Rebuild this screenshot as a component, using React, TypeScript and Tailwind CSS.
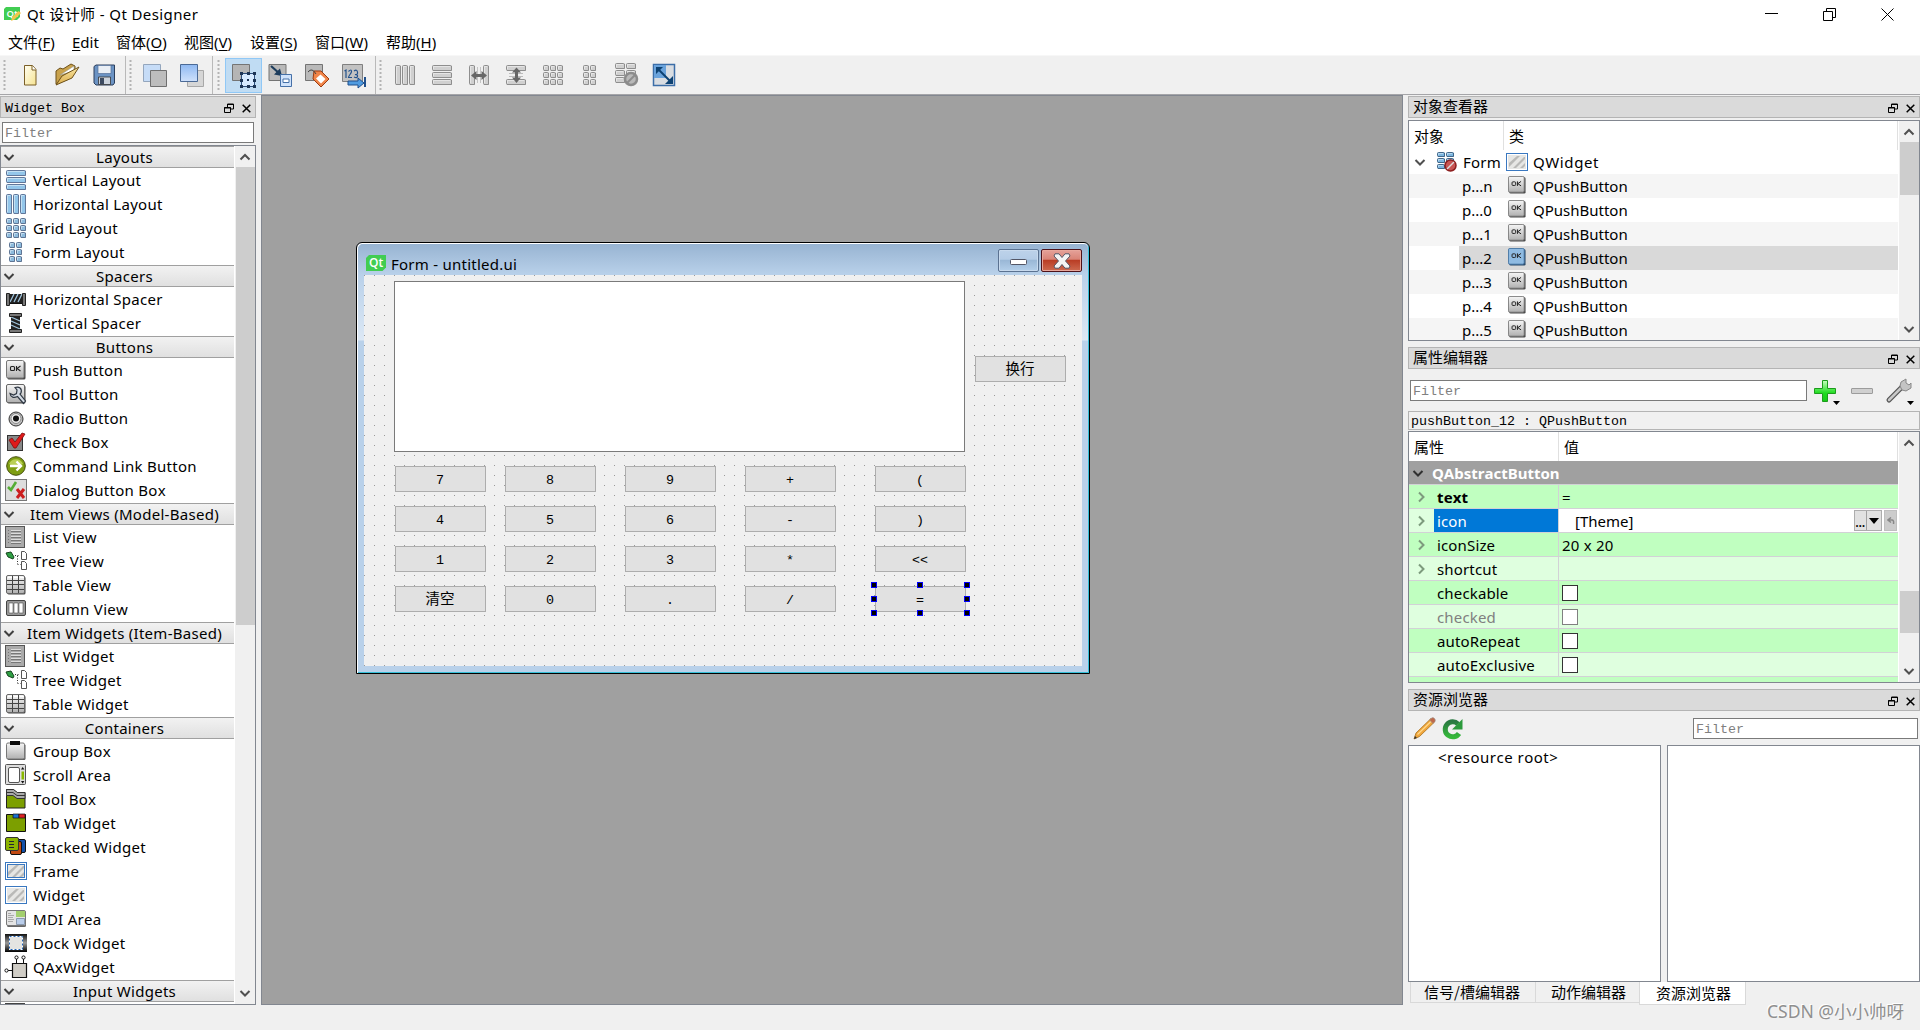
import type { ReactNode } from "react";

type IconName =
  | "vbox" | "hbox" | "grid" | "form" | "hspacer" | "vspacer" | "push" | "pushSelected" | "tool" | "radio" | "check"
  | "command" | "dialog" | "list" | "tree" | "table" | "column" | "group" | "scroll" | "toolbox" | "tab"
  | "stacked" | "frame" | "widget" | "mdi" | "dock" | "ax" | "broken";

interface WidgetGroup {
  title: string;
  items: { icon: IconName; label: string }[];
}

const widgetGroups: WidgetGroup[] = [
  {
    title: "Layouts",
    items: [
      { icon: "vbox", label: "Vertical Layout" },
      { icon: "hbox", label: "Horizontal Layout" },
      { icon: "grid", label: "Grid Layout" },
      { icon: "form", label: "Form Layout" },
    ],
  },
  {
    title: "Spacers",
    items: [
      { icon: "hspacer", label: "Horizontal Spacer" },
      { icon: "vspacer", label: "Vertical Spacer" },
    ],
  },
  {
    title: "Buttons",
    items: [
      { icon: "push", label: "Push Button" },
      { icon: "tool", label: "Tool Button" },
      { icon: "radio", label: "Radio Button" },
      { icon: "check", label: "Check Box" },
      { icon: "command", label: "Command Link Button" },
      { icon: "dialog", label: "Dialog Button Box" },
    ],
  },
  {
    title: "Item Views (Model-Based)",
    items: [
      { icon: "list", label: "List View" },
      { icon: "tree", label: "Tree View" },
      { icon: "table", label: "Table View" },
      { icon: "column", label: "Column View" },
    ],
  },
  {
    title: "Item Widgets (Item-Based)",
    items: [
      { icon: "list", label: "List Widget" },
      { icon: "tree", label: "Tree Widget" },
      { icon: "table", label: "Table Widget" },
    ],
  },
  {
    title: "Containers",
    items: [
      { icon: "group", label: "Group Box" },
      { icon: "scroll", label: "Scroll Area" },
      { icon: "toolbox", label: "Tool Box" },
      { icon: "tab", label: "Tab Widget" },
      { icon: "stacked", label: "Stacked Widget" },
      { icon: "frame", label: "Frame" },
      { icon: "widget", label: "Widget" },
      { icon: "mdi", label: "MDI Area" },
      { icon: "dock", label: "Dock Widget" },
      { icon: "ax", label: "QAxWidget" },
    ],
  },
];

const menus = [
  { label: "文件", key: "F", width: "w-[64px]" },
  { label: "", key: "E", rest: "dit", width: "w-[44px]" },
  { label: "窗体", key: "O", width: "w-[68px]" },
  { label: "视图", key: "V", width: "w-[66px]" },
  { label: "设置", key: "S", width: "w-[65px]" },
  { label: "窗口", key: "W", width: "w-[71px]" },
  { label: "帮助", key: "H", width: "w-[64px]" },
];

const columns = [31, 141, 261, 381, 511];
const rows = [191, 231, 271, 311];
const keypad = [
  ["7", "8", "9", "+", "("],
  ["4", "5", "6", "-", ")"],
  ["1", "2", "3", "*", "<<"],
  ["清空", "0", ".", "/", "="],
];

const objects = ["n", "0", "1", "2", "3", "4", "5"];

const properties = [
  { name: "text", value: "=", expandable: true, bold: true },
  { name: "icon", value: "[Theme]", expandable: true, selected: true },
  { name: "iconSize", value: "20 x 20", expandable: true },
  { name: "shortcut", value: "", expandable: true },
  { name: "checkable", checkbox: true },
  { name: "checked", checkbox: true, disabled: true },
  { name: "autoRepeat", checkbox: true },
  { name: "autoExclusive", checkbox: true },
];

const mono = "font-['Liberation_Mono','Noto_Sans_CJK_SC',monospace] text-[13.33px] tracking-normal";

function Bars({ cells, fill, stroke }: { cells: number[][]; fill: string; stroke: string }) {
  return (
    <>
      {cells.map(([x, y, w, h], i) => (
        <g key={i}>
          <rect x={x + 0.5} y={y + 0.5} width={w - 1} height={h - 1} rx="1" fill={fill} stroke={stroke} />
          <path d={`M${x + 1.5} ${y + h - 2}V${y + 1.5}H${x + w - 2}`} fill="none" stroke="#fff" strokeOpacity=".45" />
          <path d={`M${x + 1} ${y + h - 0.5}H${x + w - 0.5}V${y + 1}`} fill="none" stroke={stroke} />
        </g>
      ))}
    </>
  );
}

const vboxCells = [[0, 0, 20, 6], [0, 7, 20, 6], [0, 14, 20, 6]];
const hboxCells = [[0, 0, 6, 20], [7, 0, 6, 20], [14, 0, 6, 20]];
const gridCells = [0, 7, 14].flatMap((y) => [0, 7, 14].map((x) => [x, y, 6, 6]));
const formCells = [0, 7, 14].flatMap((y) => [3, 10].map((x) => [x, y, 6, 6]));

function Raised() {
  return (
    <>
      <rect x="1.5" y="1.5" width="18" height="18" rx="1.5" fill="#444" />
      <rect x=".5" y=".5" width="18" height="18" rx="1.5" fill="url(#metal)" stroke="#666" />
    </>
  );
}

function WidgetGlyph({ name }: { name: IconName }) {
  switch (name) {
    case "vbox":
      return <Bars cells={vboxCells} fill="#93c6ea" stroke="#61779a" />;
    case "hbox":
      return <Bars cells={hboxCells} fill="#93c6ea" stroke="#61779a" />;
    case "grid":
      return <Bars cells={gridCells} fill="#8dbbdd" stroke="#5f7594" />;
    case "form":
      return <Bars cells={formCells} fill="#8dbbdd" stroke="#5f7594" />;
    case "hspacer":
      return (
        <>
          <path d="M3 5h14v10H3z" fill="#222" />
          <path d="M4 13l4-8M8 13l4-8M12 13l4-8" stroke="#9fc4dd" strokeWidth="1.3" />
          <path d="M3 14.5h14" stroke="#111" />
          <path d="M.5 4.5h3v12h-3zM16.500 4.500h3v12h-3z" fill="#777" stroke="#222" />
        </>
      );
    case "vspacer":
      return (
        <>
          <path d="M5 3h9v14H5z" fill="#222" />
          <path d="M5 4l9 4M5 8l9 4M5 12l9 4" stroke="#9fc4dd" strokeWidth="1.3" />
          <path d="M3.500 .5h12v3h-12zM3.500 16.500h12v3h-12z" fill="#777" stroke="#222" />
        </>
      );
    case "push":
    case "pushSelected":
      return (
        <>
          <rect x="1.500" y="1.500" width="18" height="18" rx="1.500" fill={name === "push" ? "#4a4a4a" : "#2b4a68"} />
          <rect x=".5" y=".5" width="17.500" height="17.500" rx="1.500" fill={name === "push" ? "url(#metal)" : "#8fbbe2"} stroke={name === "push" ? "#777" : "#3f6f9f"} />
          <rect x="4.500" y="6.500" width="4" height="4" rx="1" fill="none" stroke="#222" strokeWidth="1.100" />
          <path d="M10.500 6v5M14.500 6l-3.500 2.500 3.500 2.500" fill="none" stroke="#222" strokeWidth="1.100" />
        </>
      );
    case "tool":
      return (
        <>
          <Raised />
          <path d="M9 3.500c4-1.500 7.500 1 6 5.500l-1 1 5.500 7-2 2.500-6-7c-3.500 1.500-7 1-7.500-3l3.500 1.500 3-1.500.5-3.500z" fill="#d4dbe4" stroke="#2f3843" strokeWidth="1.200" />
        </>
      );
    case "radio":
      return (
        <>
          <circle cx="10" cy="11" r="7" fill="#c2c2c2" stroke="#333" />
          <circle cx="10" cy="10.500" r="5" fill="#eee" stroke="#888" />
          <circle cx="10" cy="10.500" r="3" fill="#111" />
        </>
      );
    case "check":
      return (
        <>
          <rect x="1.500" y="3.500" width="15" height="15" fill="#888" stroke="#333" />
          <path d="M3 8l3-2 3 4 7-9 3 1-9 14H8z" fill="#e01b1b" stroke="#7c0f0f" strokeWidth=".8" />
        </>
      );
    case "command":
      return (
        <>
          <circle cx="10" cy="10" r="9.300" fill="#7f9e12" stroke="#454f0c" />
          <path d="M3 8a7.500 7.500 0 0114 0c-4 2-10 2-14 0z" fill="#b9cf56" />
          <path d="M4 10h11M10.500 5.500L15 10l-4.500 4.500" fill="none" stroke="#fff" strokeWidth="2.400" />
        </>
      );
    case "dialog":
      return (
        <>
          <rect x="-.5" y="-.5" width="21" height="21" fill="#ddd" stroke="#777" />
          <path d="M2 7l3 3 5-8" fill="none" stroke="#55ad35" strokeWidth="2.600" />
          <path d="M11 9l7 9M18 9l-7 9" stroke="#cc1f1f" strokeWidth="3" />
        </>
      );
    case "list":
      return (
        <>
          <rect x="-.5" y="-.5" width="19" height="21" fill="#aaa" stroke="#555" />
          <path d="M5 3.500h10M5 6.500h10M5 9.500h10M5 12.500h10M5 15.500h10" stroke="#dcdcdc" />
          <path d="M2 3.500h1M2 6.500h1M2 9.500h1M2 12.500h1M2 15.500h1M5 4.500h10M5 7.500h10M5 10.500h10M5 13.500h10M5 16.500h10" stroke="#777" />
        </>
      );
    case "tree":
      return (
        <>
          <path d="M0 2l5-1 3 5-1 2-5-2z" fill="#2fa044" stroke="#16451e" />
          <path d="M9 4.500h5M11.500 5v8M11.500 13.500h3" stroke="#333" strokeDasharray="1 1.500" />
          <path d="M15.500 .5h3l2 2v6h-5zM15.500 10.500h3l2 2v6h-5z" fill="#fff" stroke="#555" />
        </>
      );
    case "table":
      return (
        <>
          <Raised />
          <path d="M1 5.500h17M1 9.500h17M1 14.500h17M6.500 1v17M12.500 1v17" stroke="#444" />
          <path d="M2 2.500h4M8 2.500h4M14 2.500h4" stroke="#fff" />
        </>
      );
    case "column":
      return (
        <>
          <rect x=".5" y="1.500" width="19" height="15" rx="1.500" fill="#999" stroke="#444" />
          <path d="M3 4h4v10H3zM8 4h4v10H8zM13 4h4v10h-4z" fill="#fff" stroke="#555" strokeWidth=".6" />
        </>
      );
    case "group":
      return (
        <>
          <rect x="1.500" y="3" width="18" height="16" rx="1.500" fill="#555" />
          <rect x=".5" y="2" width="18" height="16" rx="1.500" fill="url(#metal)" stroke="#777" />
          <path d="M4 0h10v4H4z" fill="#0a0a0a" />
        </>
      );
    case "scroll":
      return (
        <>
          <rect x="-.5" y="-.5" width="20" height="20" rx="1" fill="#ddd" stroke="#555" />
          <rect x="2.500" y="2.500" width="11" height="15" rx="1.500" fill="#fff" stroke="#555" />
          <path d="M15.500 6.500h2.500v8h-2.500z" fill="#8ab800" />
          <path d="M15 4.500l1.700-2.500 1.700 2.500zM15 16l1.700 2.500 1.700-2.500z" fill="#111" />
        </>
      );
    case "toolbox":
      return (
        <>
          <path d="M.5 .5h7l3 3h8.500v15.500H.5z" fill="#7c9f00" stroke="#222" />
          <path d="M.5 .5h7l4 3h7.500v6h-8l-4-3H.5z" fill="#aaa" stroke="#333" />
          <path d="M.5 3.500h6.500l4 3h8" fill="none" stroke="#333" />
        </>
      );
    case "tab":
      return (
        <>
          <path d="M.5 1.500h19v17H.5z" fill="#7c9f00" stroke="#111" />
          <path d="M7 1h6v4H7z" fill="#1a6fd0" stroke="#111" strokeWidth=".7" />
          <path d="M13 1h6v4h-6z" fill="#d22" stroke="#111" strokeWidth=".7" />
        </>
      );
    case "stacked":
      return (
        <>
          <rect x="8.500" y="2.500" width="11" height="13" rx="1.500" fill="#1450a8" stroke="#111" />
          <rect x="4.500" y="4.500" width="11" height="13" rx="1.500" fill="#c24a12" stroke="#111" />
          <rect x="-.5" y=".5" width="13" height="13" rx="1.500" fill="#8cb300" stroke="#333" />
          <path d="M3 4.500h5M3 7.500h5M3 10.500h5" stroke="#223" />
        </>
      );
    case "frame":
    case "widget":
      return (
        <>
          <rect x="-.5" y="1.500" width="21" height="17" fill="#fff" stroke="#3a78c0" />
          <rect x="1" y="3" width="18" height="14" fill="#e6e6e4" />
          <path d="M2 11l8-7h3L2 15zM6 16L17 5h1v2l-9 9zM13 16l5-5v3l-2 2z" fill="#b9b9b7" />
          {name === "frame" && <rect x="1.500" y="3.500" width="17" height="13" fill="none" stroke="#3a78c0" />}
        </>
      );
    case "mdi":
      return (
        <>
          <rect x="1" y="2.500" width="19" height="15.500" rx="1.500" fill="#666" />
          <rect x=".5" y="1.500" width="19" height="15" rx="1.500" fill="#e4e4e4" stroke="#777" />
          <path d="M10 2h9v6h-9z" fill="#a3cf6e" />
          <path d="M10.500 9.500h8v6h-8z" fill="#b9cdea" stroke="#8a9ab0" />
          <path d="M2 4.500h3M2 6.500h6M2 8.500h5M2 10.500h6M2 12.500h5" stroke="#aaa" />
        </>
      );
    case "dock":
      return (
        <>
          <rect x="-1" y="1" width="22" height="18" fill="url(#dark)" />
          <rect x="3.500" y="3.500" width="13" height="13" fill="#e4e4e2" stroke="#fff" />
          <rect x="3.500" y="3.500" width="13" height="13" fill="none" stroke="#2264b5" strokeDasharray="2 2" />
        </>
      );
    case "ax":
      return (
        <>
          <path d="M6.500 6.500h14v14h-14z" fill="#d0cdc6" stroke="#111" strokeWidth="1.200" />
          <path d="M10.500 6V2M17.500 6V2M6 13.500H1" stroke="#111" />
          <circle cx="10.500" cy=".5" r="1.600" fill="#fff" stroke="#111" />
          <circle cx="17.500" cy=".5" r="1.600" fill="#fff" stroke="#111" />
          <circle cx="0.500" cy="13.500" r="1.600" fill="#fff" stroke="#111" />
        </>
      );
    case "broken":
      return (
        <>
          <Bars cells={[[0, 0, 8, 5], [9, 0, 8, 5], [0, 6, 8, 5], [9, 6, 8, 5], [0, 12, 8, 5]]} fill="#7db6e0" stroke="#416789" />
          <circle cx="13.500" cy="13.500" r="5.500" fill="#c85553" stroke="#8c1f1f" strokeWidth="1.500" />
          <path d="M10 17l7-7" stroke="#ddd" strokeWidth="1.500" />
        </>
      );
  }
}

function WidgetIcon({ name }: { name: IconName }) {
  return (
    <svg className="h-5 w-5 shrink-0 overflow-visible" viewBox="0 0 20 20">
      <WidgetGlyph name={name} />
    </svg>
  );
}

function Chevron({ dir, color = "#505050" }: { dir: "up" | "down" | "right"; color?: string }) {
  const paths = {
    up: "M1.500 8.500L6 4l4.500 4.500",
    down: "M1.500 4L6 8.500 10.500 4",
    right: "M4 1.500L8.500 6 4 10.500",
  };
  return (
    <svg className="h-3 w-3 shrink-0" viewBox="0 0 12 12" fill="none" stroke={color} strokeWidth="2">
      <path d={paths[dir]} />
    </svg>
  );
}

function ScrollBar({ before, thumb }: { before: string; thumb: string }) {
  return (
    <div className="flex w-[20px] shrink-0 flex-col items-center bg-[#f0f0f0]">
      <div className="flex h-[21px] shrink-0 items-center">
        <Chevron dir="up" />
      </div>
      <div className={`shrink-0 ${before}`} />
      <div className={`w-[19px] shrink-0 bg-[#cdcdcd] ${thumb}`} />
      <div className="mt-auto flex h-[23px] shrink-0 items-center">
        <Chevron dir="down" />
      </div>
    </div>
  );
}

function DockTitle({ children }: { children: ReactNode }) {
  return (
    <div className={`flex h-[22px] shrink-0 items-center border border-[#b4b4b4] bg-[#dadada] pt-[2px] pl-1 text-black ${mono}`}>
      <span className="pt-[2px]">{children}</span>
      <svg className="ml-auto h-[10px] w-[10px]" viewBox="0 0 10 10" fill="none" stroke="#000">
        <path d="M3.500 4V1h6v5h-3M3 1.500h7M.5 4.500h6v5h-6zM0 5h7" />
      </svg>
      <svg className="mr-[4px] ml-[8px] h-[9px] w-[9px]" viewBox="0 0 9 9" stroke="#000" strokeWidth="1.500">
        <path d="M.7 .7l7.600 7.600M8.300 .7L.7 8.300" />
      </svg>
    </div>
  );
}

function FilterInput({ className }: { className: string }) {
  return (
    <div className={`flex h-[21px] items-center border border-[#7a7a7a] bg-white pt-[2px] pl-[2px] text-[#808080] ${mono} ${className}`}>
      Filter
    </div>
  );
}

function Handle({ className }: { className: string }) {
  return (
    <svg className={`h-8 w-[3px] shrink-0 ${className}`} viewBox="0 0 3 32" stroke="#b4b4b4" strokeWidth="2">
      <path d="M1.500 1v31" strokeDasharray="2 2" />
    </svg>
  );
}

function ToolButton({ active, children }: { active?: boolean; children: ReactNode }) {
  return (
    <div className={`flex h-[35px] w-[37px] shrink-0 items-center justify-center ${active ? "border border-[#90c8f6] bg-[#c0dcf3]" : ""}`}>
      <svg className="h-6 w-6 overflow-visible" viewBox="0 0 24 24" fill="none">
        {children}
      </svg>
    </div>
  );
}

const gray = { fill: "#d0d0d0", stroke: "#8e8e8e" };

function ToolBars() {
  return (
    <div className="flex h-[40px] shrink-0 items-center border-t border-b border-t-[#f7f7f7] border-b-[#a5a5a8] bg-[#f0f0f0]">
      <div className="flex h-full w-[126px] items-center border-r border-[#b9b9b9]">
        <Handle className="mr-[5px] ml-[3px]" />
        <ToolButton>
          <path d="M6.500 2.500h8l3.500 4v15.500H6.500z" fill="url(#paper)" stroke="#7b5f26" />
          <path d="M14 2.500v4.500h4" fill="#fff" stroke="#7b5f26" />
        </ToolButton>
        <ToolButton>
          <path d="M1 21V8l4-3 3 1 8-5 4 2v5l-6 8z" fill="#c9a24c" stroke="#6d511b" />
          <path d="M5 12l14-9v5z" fill="#fff" stroke="#998" strokeWidth=".6" />
          <path d="M1 22l6-9 17-9-7 11z" fill="url(#folder)" stroke="#6d511b" />
        </ToolButton>
        <ToolButton>
          <path d="M2 3.500l2-1.500h18.500v18L21 22H4l-2-2z" fill="#6b93c4" stroke="#2c3f5c" />
          <path d="M6 2.500h13v8H6z" fill="#e9eef5" stroke="#54709a" strokeWidth=".7" />
          <path d="M6.500 14h12v7.500h-12z" fill="#ccd3dc" stroke="#333" strokeWidth=".8" />
          <path d="M8 15h4v6H8z" fill="#3c4a60" />
        </ToolButton>
      </div>
      <div className="flex h-full w-[87px] items-center border-r border-[#b9b9b9]">
        <Handle className="mr-[4px] ml-[3px]" />
        <ToolButton>
          <path d="M.5 1.500h17v17H.5z" fill="#c6dcf7" stroke="#94a6bd" />
          <path d="M7.500 7.500h16v16h-16z" fill="#bdbdbd" stroke="#6f6f6f" />
        </ToolButton>
        <ToolButton>
          <path d="M7.500 7.500h16v16h-16z" fill="#d6d6d6" stroke="#a8a8a8" />
          <path d="M.5 1.500h17v17H.5z" fill="url(#blue)" stroke="#4b6a96" />
        </ToolButton>
      </div>
      <div className="flex h-full w-[163px] items-center border-r border-[#b9b9b9]">
        <Handle className="mr-[5px] ml-[4px]" />
        <ToolButton active>
          <path d="M.5 1.500h17v16H.5z" fill="#b5b5b5" stroke="#747474" />
          <path d="M9.500 10.500h13v13h-13z" fill="#d7eaff" stroke="#2d4e7a" />
          <path d="M8 9h3v3H8zM15 9h3v3h-3zM21 9h3v3h-3zM8 16h3v3H8zM21 16h3v3h-3zM8 22h3v3H8zM15 22h3v3h-3zM21 22h3v3h-3zM15 16h2v2h-2z" fill="#1d3454" />
        </ToolButton>
        <ToolButton>
          <path d="M0 1.500h17v16H0z" fill="#b9b9b9" stroke="#747474" />
          <path d="M2 3l9 8" stroke="#1c3c5c" strokeWidth="2.200" />
          <path d="M13 13l-8-1.500 6-6z" fill="#1c3c5c" />
          <path d="M11.500 11.500h11v12h-11z" fill="#cfe2fb" stroke="#4570a8" />
          <path d="M14 16h6v3.500h-6z" fill="#fff" stroke="#4570a8" />
        </ToolButton>
        <ToolButton>
          <path d="M-.5 1.500h17v16h-17z" fill="#b9b9b9" stroke="#747474" />
          <path d="M8 8h7l8 8-8 8-8-8z" fill="#f08448" stroke="#9c3b10" />
          <path d="M14.500 11.500l5 4.500-4.500 4.500-5-5z" fill="#fff" />
          <path d="M2 9q4-5 8 2" stroke="#444" />
        </ToolButton>
        <ToolButton>
          <path d="M-.5 1.500h20v17h-20z" fill="#c2c2c2" stroke="#808080" />
          <path d="M1.500 8L3 7v8M5.500 8.500q3-3 3 0c0 2-3 4-3 6h3.500M11 8q3-2 3.500 1T12 11.500q3 0 2.500 2T11 14" stroke="#23528c" strokeWidth="1.200" />
          <path d="M5 18h10v-3l6 5-6 5v-3H5z" fill="#4f9be0" stroke="#1f4f8c" />
          <path d="M22 14v10" stroke="#1f4f8c" strokeWidth="2" />
        </ToolButton>
      </div>
      <div className="flex items-center">
        <Handle className="mr-[4px] ml-[3px]" />
        <ToolButton>
          <g transform="translate(2 2)"><Bars cells={hboxCells} {...gray} /></g>
        </ToolButton>
        <ToolButton>
          <g transform="translate(2 2)"><Bars cells={vboxCells} {...gray} /></g>
        </ToolButton>
        <ToolButton>
          <g transform="translate(2 2)">
            <Bars cells={[[0, 0, 6, 20], [14, 0, 6, 20]]} {...gray} />
            <path d="M8.500 2v16M11.500 2v16" stroke="#c4c4c4" />
            <path d="M2 10.500L7.500 6v3h5V6l5.500 4.500-5.500 4.500v-3h-5v3z" fill="#666" />
          </g>
        </ToolButton>
        <ToolButton>
          <g transform="translate(2 2)">
            <Bars cells={[[0, 0, 20, 6], [0, 14, 20, 6]]} {...gray} />
            <path d="M3 8.500h14M3 11.500h14" stroke="#bbb" />
            <path d="M10.500 2.500l4.500 5h-3v5h3l-4.500 5.500L6 12.500h3v-5H6z" fill="#666" />
          </g>
        </ToolButton>
        <ToolButton>
          <g transform="translate(2 2)"><Bars cells={gridCells} {...gray} /></g>
        </ToolButton>
        <ToolButton>
          <g transform="translate(2 2)"><Bars cells={formCells} {...gray} /></g>
        </ToolButton>
        <ToolButton>
          <Bars cells={[[0, 0, 10, 6], [11, 0, 10, 6], [0, 7, 10, 6], [11, 7, 10, 6], [0, 14, 10, 6]]} {...gray} />
          <circle cx="16" cy="16" r="6" fill="#b9b9b9" stroke="#8c8c8c" strokeWidth="2.500" />
          <path d="M12 20l8-8" stroke="#8c8c8c" strokeWidth="2" />
        </ToolButton>
        <ToolButton>
          <path d="M1.500 1.500h21v21h-21z" fill="#d9dde2" stroke="#3c6ea8" strokeWidth="1.500" />
          <path d="M2 2h12v13H2z" fill="#6aa3dc" />
          <path d="M6 6l12 12" stroke="#0d4273" strokeWidth="2" />
          <path d="M4 4h7l-7 7zM21 21h-8l8-8z" fill="#0d4273" />
        </ToolButton>
      </div>
    </div>
  );
}

function WidgetBox() {
  return (
    <aside className="flex w-[256px] shrink-0 flex-col pt-[1px]">
      <DockTitle>Widget Box</DockTitle>
      <FilterInput className="mx-[2px] mt-1 shrink-0" />
      <div className="mt-[2px] flex h-[860px] border border-[#828790] bg-white tracking-[0.28px]">
        <div className="w-[233px] shrink-0 overflow-hidden">
          {widgetGroups.map((group) => (
            <div key={group.title}>
              <GroupHeader title={group.title} />
              <div className="pb-px">
                {group.items.map((item) => (
                  <div key={item.label} className="flex h-6 items-center pl-[5px]">
                    <WidgetIcon name={item.icon} />
                    <span className="ml-[7px] whitespace-nowrap">{item.label}</span>
                  </div>
                ))}
              </div>
            </div>
          ))}
          <GroupHeader title="Input Widgets" />
          <div className="mt-px ml-1 h-[2px] w-5 bg-[#444]" />
        </div>
        <div className="ml-auto flex">
          <ScrollBar before="h-0" thumb="h-[458px]" />
        </div>
      </div>
    </aside>
  );
}

function GroupHeader({ title }: { title: string }) {
  return (
    <div className="flex h-[22px] items-center border-t border-b border-[#a0a0a0] bg-gradient-to-b from-[#f2f2f2] to-[#e0e0e0] pb-px pl-[2px]">
      <Chevron dir="down" color="#404040" />
      <span className="flex-1 text-center whitespace-nowrap">{title}</span>
    </div>
  );
}

function FormWindow() {
  return (
    <div className="absolute top-[146px] left-[94px] flex h-[432px] w-[734px] flex-col rounded-t-[6px] border border-black bg-[#b9d1ea] shadow-[inset_1px_1px_0_#fff,inset_-1px_-1px_0_#35bfd8]">
      <div className="mx-px mt-px flex h-[31px] shrink-0 items-start rounded-t-[5px] bg-gradient-to-b from-[#98b4d2] to-[#b9d1ea] pl-2">
        <svg className="mt-[11px] h-4 w-5" viewBox="0 0 20 16">
          <path d="M3 0h17v12.500L16.500 16H0V3z" fill="#41cd52" />
          <text x="3" y="12" fontSize="12" fontWeight="600" fill="#fff" fontFamily="Open Sans">Qt</text>
        </svg>
        <span className="mt-[8px] ml-[5px] leading-[24px] tracking-[0.25px]">Form - untitled.ui</span>
        <div className="mt-[5px] mr-[6px] ml-auto flex gap-[2px]">
          <div className="flex h-[23px] w-[41px] items-center justify-center rounded-[2px] border border-[#5b7291] bg-linear-[#bdd2ea_0%,#b4cce6_45%,#98b6d5_46%,#b4cfea_100%] shadow-[inset_0_0_0_1px_#c8daee]">
            <svg className="mt-[3px] h-[6px] w-[17px]" viewBox="0 0 17 6">
              <rect x=".5" y=".5" width="16" height="5" rx="1" fill="#fff" stroke="#535666" />
            </svg>
          </div>
          <div className="flex h-[23px] w-[41px] items-center justify-center rounded-[2px] border border-[#4d1119] bg-linear-[#e5a29a_0%,#d98376_45%,#b83a22_46%,#cd6a50_100%] shadow-[inset_0_0_0_1px_#e8a79c]">
            <svg className="h-4 w-[18px]" viewBox="0 0 18 16">
              <path d="M2 .8h4l3 3.700 3-3.700h4l1 2.200L12.500 8l4.500 5-1 2.200h-4l-3-3.700-3 3.700H2L1 13l4.500-5L1 3z" fill="#f4f4f4" stroke="#535666" />
            </svg>
          </div>
        </div>
      </div>
      <div className="flex justify-between px-px">
        <div className="h-[391px] w-[6px] bg-linear-[#b9d1ea_0,#dce8f5_65px,#b9d1ea_66px]" />
        <div className="relative h-[391px] w-[718px] bg-[#f0f0f0]">
          <DotGrid />
          <div className="absolute top-[6px] left-[30px] h-[171px] w-[571px] border border-[#7a7a7a] bg-white" />
          <FormButton x={611} y={81} label="换行" />
          {keypad.map((line, r) =>
            line.map((label, c) => <FormButton key={label} x={columns[c]} y={rows[r]} label={label} />)
          )}
          {[307, 321, 335].flatMap((y) =>
            [507, 553, 600]
              .filter((x) => !(x === 553 && y === 321))
              .map((x) => (
                <div key={`${x}-${y}`} className="absolute h-[6px] w-[6px] border border-[#0000ff] bg-black" style={{ left: x, top: y }} />
              ))
          )}
        </div>
        <div className="h-[391px] w-[6px] bg-linear-[#b9d1ea_0,#dce8f5_65px,#b9d1ea_66px]" />
      </div>
    </div>
  );
}

// design grid, one dot each 10px
function DotGrid() {
  return (
    <svg className="absolute inset-0 h-full w-full" shapeRendering="crispEdges">
      <defs>
        <pattern id="dots" width="10" height="10" patternUnits="userSpaceOnUse">
          <rect width="1" height="1" fill="#9a9a9a" />
        </pattern>
      </defs>
      <rect width="718" height="391" fill="url(#dots)" />
    </svg>
  );
}

function FormButton({ x, y, label }: { x: number; y: number; label: string }) {
  return (
    <div
      className={`absolute flex h-[26px] w-[91px] items-center justify-center border border-[#adadad] bg-[#e1e1e1] pt-[4px] pr-px ${mono}`}
      style={{ left: x, top: y }}
    >
      {label.length > 1 && label !== "<<" ? <span className="pb-[3px] text-[14.500px]">{label}</span> : label}
    </div>
  );
}

function ObjectInspector() {
  return (
    <section className="flex flex-col">
      <DockTitle>
        <span className="text-[15px]">对象查看器</span>
      </DockTitle>
      <div className="mt-[2px] flex h-[221px] border border-[#828790] bg-white">
        <div className="mr-px flex-1 overflow-hidden">
          <div className="flex h-[29px] items-center border-r border-[#e0e0e0]">
            <span className="flex h-full w-[95px] items-center border-r border-[#e0e0e0] pl-[5px]">对象</span>
            <span className="pl-[5px]">类</span>
          </div>
          <div className="flex h-6 items-center pl-[5px]">
            <Chevron dir="down" />
            <span className="ml-[11px] flex"><WidgetIcon name="broken" /></span>
            <span className="ml-[6px] w-[44px] tracking-[0.2px]">Form</span>
            <WidgetIcon name="widget" />
            <span className="ml-[6px] tracking-[0.6px]">QWidget</span>
          </div>
          {objects.map((suffix, i) => (
            <div key={suffix} className={`flex h-6 ${i % 2 === 0 ? "bg-[#f5f5f5]" : "bg-white"}`}>
              <div className={`ml-[50px] flex flex-1 items-center pl-[3px] ${suffix === "2" ? "bg-[#d9d9d9]" : ""}`}>
                <span className="w-[45px]">p...{suffix}</span>
                <span className="-mt-[3px] flex scale-90"><WidgetIcon name={suffix === "2" ? "pushSelected" : "push"} /></span>
                <span className="ml-[6px]">QPushButton</span>
              </div>
            </div>
          ))}
        </div>
        <ScrollBar before="h-0" thumb="h-[53px]" />
      </div>
    </section>
  );
}

function PropertyRow({ item, index }: { item: (typeof properties)[number]; index: number }) {
  const tint = index % 2 === 0 ? "bg-[#c0ffc0]" : "bg-[#dfffdf]";
  return (
    <div className={`flex h-6 border-b border-[#d2d2d6] ${tint}`}>
      <div className="flex w-[25px] items-center pl-[6px]">
        {item.expandable && <Chevron dir="right" color="#7d9a7d" />}
      </div>
      <div
        className={`flex w-[125px] items-center border-r border-[#d2d2d6] pl-[3px] tracking-[0.15px] ${item.bold ? "font-bold" : ""} ${item.selected ? "bg-[#0078d7] text-white" : ""} ${item.disabled ? "text-[#808080]" : ""}`}
      >
        {item.name}
      </div>
      <div className={`flex flex-1 items-center ${item.selected ? "bg-white pl-4" : "pl-[3px] tracking-[0.2px]"}`}>
        {item.checkbox ? (
          <div className={`h-4 w-4 border bg-white ${item.disabled ? "border-[#808080]" : "border-[#333]"}`} />
        ) : (
          item.value
        )}
        {item.selected && (
          <div className="ml-auto flex h-[21px]">
            <div className="flex w-[28px] border border-[#adadad] bg-[#e1e1e1]">
              <span className="w-3 border-r border-[#a0a0a0] leading-[20px] tracking-tighter">...</span>
              <svg className="mt-[7px] ml-[2px] h-[6px] w-[10px]" viewBox="0 0 10 6">
                <path d="M0 0h10L5 6z" />
              </svg>
            </div>
            <div className="mr-px ml-[2px] flex w-[13px] items-center justify-center border border-[#bfbfbf] bg-[#ccc]">
              <svg className="h-2 w-2" viewBox="0 0 8 8" fill="none" stroke="#888" strokeWidth="1.500">
                <path d="M4 .5L1 3l3 2.500M1 3h4q2 0 1.500 4" />
              </svg>
            </div>
          </div>
        )}
      </div>
    </div>
  );
}

function PropertyEditor() {
  return (
    <section className="mt-[6px] flex flex-col">
      <DockTitle>
        <span className="text-[15px]">属性编辑器</span>
      </DockTitle>
      <div className="flex h-[42px] items-center pt-px pl-[2px]">
        <FilterInput className="w-[397px]" />
        <svg className="ml-[7px] h-[26px] w-[26px] overflow-visible" viewBox="0 0 26 26">
          <path d="M8.500 2.500h5v8h8v5h-8v8h-5v-8h-8v-5h8z" fill="url(#green)" stroke="#1c9c1c" />
          <path d="M19 23h7l-3.500 4z" />
        </svg>
        <svg className="ml-[11px] h-[6px] w-[22px]" viewBox="0 0 22 6">
          <rect x=".5" y=".5" width="21" height="5" rx=".5" fill="#d0d0d0" stroke="#9c9c9c" />
        </svg>
        <svg className="ml-[13px] h-[26px] w-[28px] overflow-visible" viewBox="0 0 28 26">
          <path d="M3 22L16 9" stroke="#555" strokeWidth="5" strokeLinecap="round" />
          <path d="M3 22L16 9" stroke="#c8c8c8" strokeWidth="2.500" strokeLinecap="round" />
          <path d="M14 8l1-4 5-3v4l3 2 2-2v5l-5 3-4-1z" fill="#c4c4c4" stroke="#888" />
          <path d="M21 23h7l-3.500 4z" />
        </svg>
      </div>
      <div className={`flex h-[19px] items-center border border-[#b4b4b4] pt-[2px] pl-[2px] ${mono}`}>pushButton_12 : QPushButton</div>
      <div className="mt-px flex h-[252px] border border-[#828790] bg-white">
        <div className="mr-px flex-1 overflow-hidden">
          <div className="flex h-[29px] items-center border-r border-[#e0e0e0]">
            <span className="flex h-full w-[150px] items-center border-r border-[#e0e0e0] pl-[5px]">属性</span>
            <span className="pl-[5px]">值</span>
          </div>
          <div className="flex h-6 items-center border-b border-[#d2d2d6] bg-[#a0a0a0] pl-[3px] font-bold text-white">
            <Chevron dir="down" color="#303030" />
            <span className="ml-2">QAbstractButton</span>
          </div>
          {properties.map((item, i) => (
            <PropertyRow key={item.name} item={item} index={i} />
          ))}
          <div className="h-[6px] bg-[#c0ffc0]" />
        </div>
        <ScrollBar before="h-[138px]" thumb="h-[42px]" />
      </div>
    </section>
  );
}

function ResourceBrowser() {
  return (
    <section className="mt-[6px] flex flex-col">
      <DockTitle>
        <span className="text-[15px]">资源浏览器</span>
      </DockTitle>
      <div className="flex h-[34px] items-center pt-px pr-[2px] pl-[5px]">
        <svg className="h-[23px] w-[23px]" viewBox="0 0 23 23">
          <path d="M1 22l2-6L18 1.500l3.500 3.500L6.500 19.500z" fill="#f0a63c" stroke="#a8701c" strokeWidth=".8" />
          <path d="M4.500 17.500L19 3.500" stroke="#ffd98c" strokeWidth="1.200" />
          <path d="M16.500 3L18.500 1q1.500-1 3 .5t.5 3L20 6.500z" fill="#c0694a" stroke="#999" strokeWidth=".6" />
          <path d="M1 22l1-3 2 2z" fill="#333" />
        </svg>
        <svg className="ml-[5px] h-[22px] w-[22px]" viewBox="0 0 22 22">
          <path d="M18 15.500A7.500 7.500 0 1117 6" fill="none" stroke="url(#reload)" strokeWidth="5" />
          <path d="M21.500 1v10.500H11z" fill="#2c9a3c" />
        </svg>
        <FilterInput className="ml-auto w-[225px]" />
      </div>
      <div className="flex h-[237px] gap-[6px]">
        <div className="w-[253px] border border-[#828790] bg-white pt-[1px] pl-[29px] tracking-[0.5px]">&lt;resource root&gt;</div>
        <div className="flex-1 border border-[#828790] bg-white" />
      </div>
      <div className="flex items-start pl-[2px] font-['Noto_Sans_CJK_SC',sans-serif] text-[15px]">
        <div className="flex h-[21px] w-[126px] items-center justify-center border border-t-0 border-[#d9d9d9] pr-[2px]">信号/槽编辑器</div>
        <div className="flex h-[21px] w-[103px] items-center justify-center border-b border-[#d9d9d9] pl-[2px]">动作编辑器</div>
        <div className="flex h-[23px] w-[107px] items-center justify-center border border-t-0 border-[#d9d9d9] bg-white pl-[2px]">资源浏览器</div>
      </div>
    </section>
  );
}

export default function App() {
  return (
    <div className="relative flex h-[1030px] w-[1920px] flex-col overflow-hidden bg-[#f0f0f0] font-['Noto_Sans','Noto_Sans_CJK_SC',sans-serif] text-[15px] leading-[20px] text-black [font-kerning:none]">
      <svg className="absolute h-0 w-0">
        <defs>
          <linearGradient id="metal" x1="0" y1="0" x2="0" y2="1"><stop stopColor="#f6f6f6" /><stop offset="1" stopColor="#b0b0b0" /></linearGradient>
          <linearGradient id="dark" x1="0" y1="0" x2="0" y2="1"><stop stopColor="#111" /><stop offset=".5" stopColor="#999" /><stop offset="1" stopColor="#000" /></linearGradient>
          <linearGradient id="paper" x1="0" y1="0" x2="1" y2="1"><stop stopColor="#fffef2" /><stop offset="1" stopColor="#f6e391" /></linearGradient>
          <linearGradient id="folder" x1="0" y1="0" x2="0" y2="1"><stop stopColor="#fae6a0" /><stop offset="1" stopColor="#d9ac4c" /></linearGradient>
          <linearGradient id="blue" x1="0" y1="0" x2="0" y2="1"><stop stopColor="#8fb9f2" /><stop offset="1" stopColor="#cfe1fb" /></linearGradient>
          <linearGradient id="green" x1="0" y1="0" x2="0" y2="1"><stop stopColor="#c8ffc0" /><stop offset=".6" stopColor="#1fdc1f" /><stop offset="1" stopColor="#17c817" /></linearGradient>
          <linearGradient id="reload" x1="0" y1="0" x2="0" y2="1"><stop stopColor="#2a7a42" /><stop offset="1" stopColor="#35b83a" /></linearGradient>
        </defs>
      </svg>

      <header className="flex h-[28px] shrink-0 items-center bg-white pl-1">
        <svg className="h-4 w-[17px] overflow-visible" viewBox="0 0 17 16">
          <path d="M2 1h14v10l-3 3H0V3z" fill="#41cd52" />
          <text x="2.500" y="10.500" fontSize="9.500" fontWeight="600" fill="#fff" fontFamily="Open Sans">Qt</text>
          <path d="M7 15l1.500-4 6-6 2.500 2-6.500 6.500z" fill="#f2c54a" />
        </svg>
        <span className="ml-[6px] tracking-[0.4px]">Qt 设计师 - Qt Designer</span>
        <div className="mr-[26px] ml-auto flex items-center gap-[45px]">
          <svg className="h-[13px] w-[13px]" viewBox="0 0 13 13" stroke="#000"><path d="M0 5.500h13" /></svg>
          <svg className="h-[13px] w-[13px]" viewBox="0 0 13 13" fill="none" stroke="#000"><path d="M.5 3.500h9v9h-9zM3.500 3V.5h9v9H10" /></svg>
          <svg className="h-[13px] w-[13px]" viewBox="0 0 13 13" stroke="#000"><path d="M.5 .5l12 12M12.500 .5l-12 12" /></svg>
        </div>
      </header>
      <nav className="flex h-[27px] shrink-0 items-center bg-white pl-2">
        {menus.map((menu) => (
          <span key={menu.key} className={`whitespace-nowrap ${menu.width}`}>
            {menu.label}
            {menu.rest ? "" : "("}
            <u className="underline-offset-2">{menu.key}</u>
            {menu.rest ?? ")"}
          </span>
        ))}
      </nav>
      <ToolBars />

      <main className="flex h-[910px] shrink-0">
        <WidgetBox />
        <div className="relative ml-[5px] h-full w-[1142px] border border-[#828790] bg-[#a0a0a0]">
          <FormWindow />
        </div>
        <div className="ml-[5px] flex w-[512px] flex-col pt-[1px]">
          <ObjectInspector />
          <PropertyEditor />
          <ResourceBrowser />
        </div>
      </main>

      <div className="absolute right-[16px] bottom-[6px] text-[17.500px] leading-[26px] text-[#8f8f8f] [text-shadow:-1px_-1px_0_#fff]">
        CSDN @小小帅呀
      </div>
    </div>
  );
}
